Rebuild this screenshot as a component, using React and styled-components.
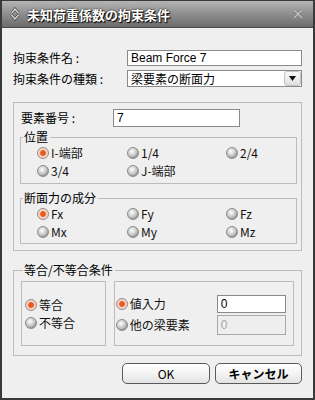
import React from "react";
import styled, { createGlobalStyle } from "styled-components";

const GlobalStyle = createGlobalStyle`
  body {
    margin: 0;
    font-family: "Noto Sans CJK JP", sans-serif;
    font-size: 12px;
    color: #000;
  }
`;

const Window = styled.div`
  width: 315px;
  height: 400px;
  box-sizing: border-box;
  border: 2px solid #3a3a3a;
  border-top-width: 1px;
  background: #efefef;
  display: flex;
  flex-direction: column;
`;

const TitleBar = styled.div`
  height: 27px;
  box-sizing: border-box;
  display: flex;
  align-items: center;
  padding: 0 9px 0 8px;
  background: linear-gradient(#b4b4b4, #8e8e8e 50%, #6c6c6c);
  border-bottom: 1px solid #4a4a4a;
`;

const Title = styled.span`
  margin-left: 7px;
  font-size: 13px;
  font-weight: bold;
  line-height: 15px;
  color: #fff;
  text-shadow: 0 0 2px #000, 1px 1px 1px #000;
`;

const Close = styled.svg`
  margin-left: auto;
  opacity: 0.85;
`;

const Body = styled.div`
  padding: 22px 11px 0;
`;

const Row = styled.div`
  display: flex;
  align-items: center;
  height: ${(p) => p.h}px;
  margin-bottom: ${(p) => p.mb || 0}px;
`;

const Label = styled.span`
  width: ${(p) => p.w}px;
  padding-left: ${(p) => p.pl || 0}px;
  box-sizing: border-box;
  line-height: 14px;
  white-space: nowrap;
`;

const Input = styled.div`
  width: ${(p) => p.w}px;
  height: ${(p) => p.h}px;
  box-sizing: border-box;
  border: 1px solid ${(p) => (p.disabled ? "#a9a9a9" : "#8a8a8a")};
  background: ${(p) => (p.disabled ? "#eeeeee" : "#fff")};
  color: ${(p) => (p.disabled ? "#a8a8a8" : "#000")};
  padding-left: 3px;
  display: flex;
  align-items: center;
  font-family: "Liberation Sans", "Noto Sans CJK JP", sans-serif;
  font-size: 12px;
  line-height: 14px;
`;

const Select = styled(Input)`
  padding: 0 0 0 3px;
  font-family: "Noto Sans CJK JP", sans-serif;
`;

const DropButton = styled.span`
  margin-left: auto;
  width: 17px;
  height: 15px;
  box-sizing: border-box;
  border: 1px solid #c4c4c4;
  border-radius: 3px;
  background: linear-gradient(#fbfbfb, #dedede);
  display: flex;
  align-items: center;
  justify-content: center;
`;

const Group = styled.div`
  margin-top: ${(p) => p.mt}px;
  border: 1px solid #bcbcbc;
  padding: 6px 4px 6px 6px;
`;

const Fieldset = styled.fieldset`
  margin: ${(p) => p.mt}px 0 0;
  border: 1px solid #bcbcbc;
  padding: ${(p) => p.pad};
  min-width: 0;
`;

const Legend = styled.legend`
  margin-left: 2px;
  padding: 0 2px 0 1px;
  line-height: 14px;
`;

const RadioGrid = styled.div`
  display: grid;
  grid-template-columns: 90px 99px 1fr;
  grid-auto-rows: 18px;
  padding-left: 16px;
`;

const RadioItem = styled.label`
  display: flex;
  align-items: center;
  gap: 2px;
  white-space: nowrap;
  line-height: 14px;
  color: #111;
`;

const Dot = styled.span`
  width: 12px;
  height: 12px;
  box-sizing: border-box;
  border-radius: 50%;
  border: 1px solid ${(p) => (p.on ? "#a08a80" : "#8c8c8c")};
  background: ${(p) =>
    p.on
      ? "radial-gradient(circle at 50% 50%, #f4581a 0, #e9561c 2.3px, #f6b896 3.2px, #f4e6de 4px, #cfc4c0 5.5px)"
      : "radial-gradient(circle at 40% 35%, #ffffff 0, #e6e6e6 2px, #bdbdbd 5px, #9a9a9a 6px)"};
  flex: none;
`;

const Split = styled.div`
  display: flex;
  gap: 8px;
`;

const Box = styled.div`
  width: ${(p) => p.w}px;
  height: 65px;
  box-sizing: border-box;
  border: 1px solid #bcbcbc;
  padding: ${(p) => p.pad};
`;

const Stack = styled.div`
  display: grid;
  grid-auto-rows: 18px;
`;

const ValueGrid = styled.div`
  display: grid;
  grid-template-columns: 101px 69px;
  grid-template-rows: 18px 20px;
  row-gap: 2px;
  align-items: center;
`;

const ButtonRow = styled.div`
  display: flex;
  justify-content: flex-end;
  gap: 5px;
  margin-top: 7px;
`;

const Button = styled.button`
  width: ${(p) => p.w}px;
  height: 21px;
  box-sizing: border-box;
  border: 1px solid #5a5a5a;
  border-radius: 5px;
  background: linear-gradient(#ffffff, #f4f4f4 50%, #e2e2e2);
  font-family: "Noto Sans CJK JP", sans-serif;
  font-size: 12px;
  font-weight: ${(p) => (p.bold ? "bold" : "normal")};
  color: #000;
  padding: 0;
  line-height: 14px;
`;

const Radio = ({ on, children }) => (
  <RadioItem>
    <Dot on={on ? 1 : 0} />
    <span>{children}</span>
  </RadioItem>
);

export default function App() {
  return (
    <>
      <GlobalStyle />
      <Window>
        <TitleBar>
          <svg width="10" height="14" viewBox="0 0 10 14">
            <path d="M1.5 6 L5 2 L8.5 6" fill="none" stroke="#333" strokeWidth="2.6" />
            <path d="M1.5 6 L5 2 L8.5 6" fill="none" stroke="#e6e6e6" strokeWidth="1.2" />
            <path d="M1.5 8 L5 12 L8.5 8" fill="none" stroke="#333" strokeWidth="2.6" />
            <path d="M1.5 8 L5 12 L8.5 8" fill="none" stroke="#e6e6e6" strokeWidth="1.2" />
          </svg>
          <Title>未知荷重係数の拘束条件</Title>
          <Close width="12" height="12" viewBox="0 0 12 12">
            <path d="M2 2 L10 10 M10 2 L2 10" stroke="#7a7a7a" strokeWidth="3" />
            <path d="M2 2 L10 10 M10 2 L2 10" stroke="#d0d0d0" strokeWidth="1.3" />
          </Close>
        </TitleBar>
        <Body>
          <Row h={16} mb={4}>
            <Label w={114}>拘束条件名 :</Label>
            <Input w={175} h={16}>Beam Force 7</Input>
          </Row>
          <Row h={17}>
            <Label w={114}>拘束条件の種類 :</Label>
            <Select w={175} h={17}>
              梁要素の断面力
              <DropButton>
                <svg width="7" height="5" viewBox="0 0 7 5">
                  <path d="M0 0 H7 L3.5 5 Z" fill="#111" />
                </svg>
              </DropButton>
            </Select>
          </Row>

          <Group mt={15}>
            <Row h={18}>
              <Label w={93} pl={1}>要素番号 :</Label>
              <Input w={127} h={18}>7</Input>
            </Row>
            <Fieldset mt={3} pad="0 0 3px 0">
              <Legend>位置</Legend>
              <RadioGrid>
                <Radio on>I-端部</Radio>
                <Radio>1/4</Radio>
                <Radio>2/4</Radio>
                <Radio>3/4</Radio>
                <Radio>J-端部</Radio>
              </RadioGrid>
            </Fieldset>
            <Fieldset mt={7} pad="0 0 2px 0">
              <Legend>断面力の成分</Legend>
              <RadioGrid>
                <Radio on>Fx</Radio>
                <Radio>Fy</Radio>
                <Radio>Fz</Radio>
                <Radio>Mx</Radio>
                <Radio>My</Radio>
                <Radio>Mz</Radio>
              </RadioGrid>
            </Fieldset>
          </Group>

          <Fieldset mt={12} pad="4px 7px 9px 7px">
            <Legend>等合/不等合条件</Legend>
            <Split>
              <Box w={85} pad="14px 0 0 3px">
                <Stack>
                  <Radio on>等合</Radio>
                  <Radio>不等合</Radio>
                </Stack>
              </Box>
              <Box w={181} pad="13px 0 0 1px">
                <ValueGrid>
                  <Radio on>値入力</Radio>
                  <Input w={69} h={18}>0</Input>
                  <Radio>他の梁要素</Radio>
                  <Input w={69} h={20} disabled>0</Input>
                </ValueGrid>
              </Box>
            </Split>
          </Fieldset>

          <ButtonRow>
            <Button w={88}>OK</Button>
            <Button w={87} bold>キャンセル</Button>
          </ButtonRow>
        </Body>
      </Window>
    </>
  );
}
